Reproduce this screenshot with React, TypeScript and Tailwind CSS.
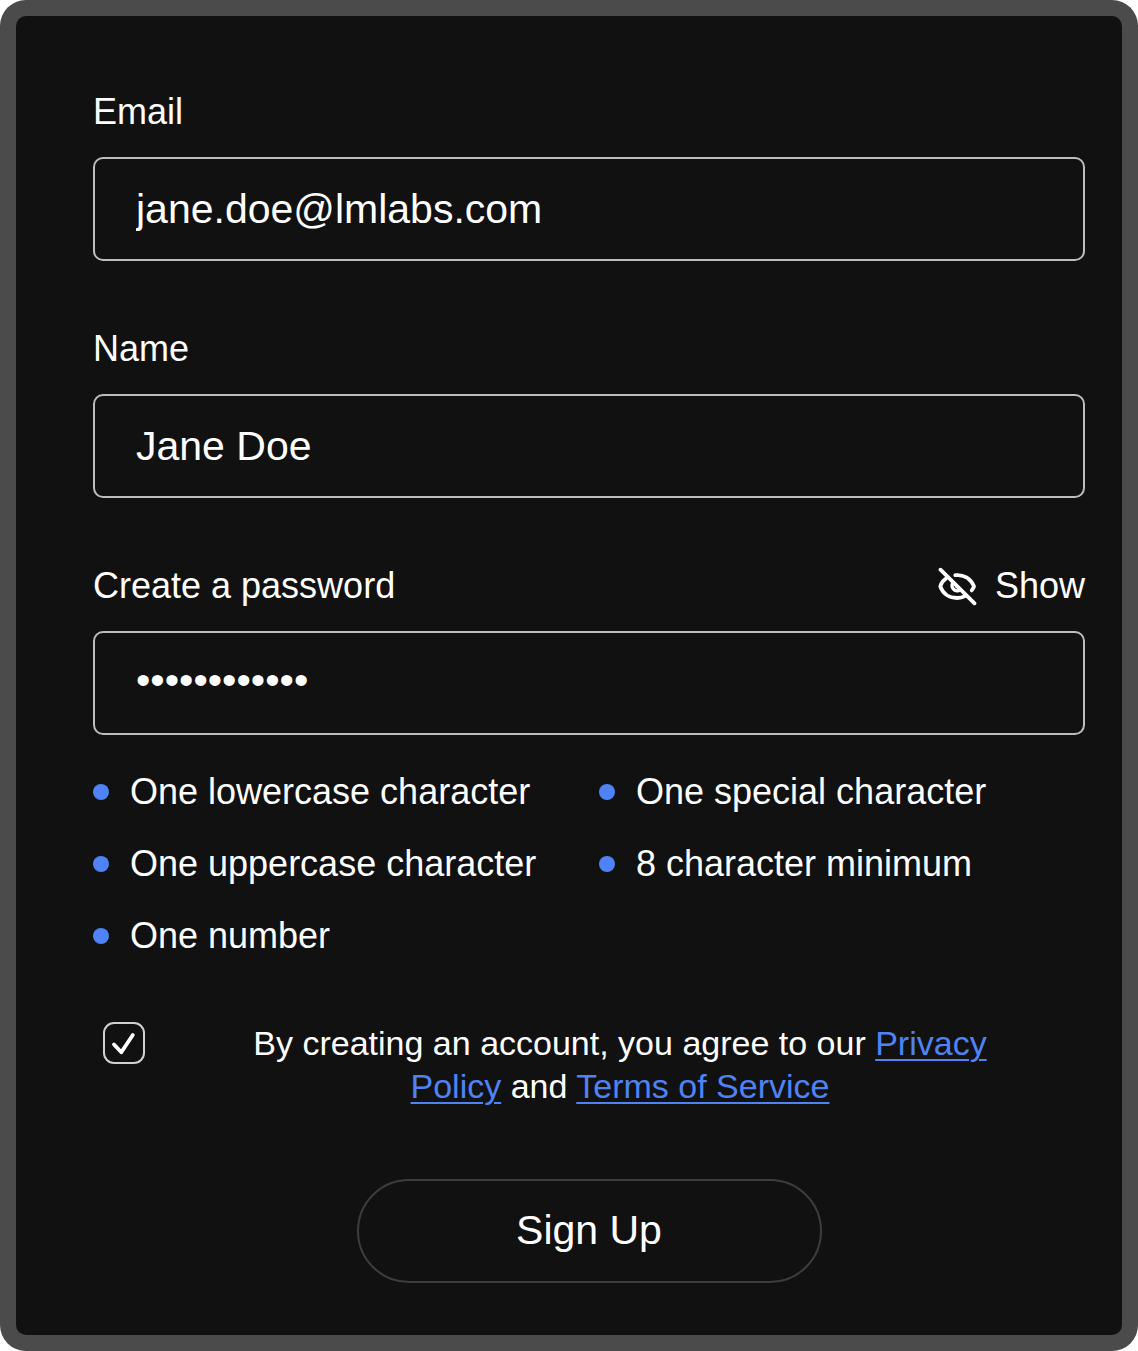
import { useState } from "react";

const rules = [
  "One lowercase character",
  "One special character",
  "One uppercase character",
  "8 character minimum",
  "One number",
];

const fieldClass =
  "block h-[104px] w-full rounded-[10px] border-2 border-[#bdbdbd] bg-transparent px-[41px] text-[41px] text-white outline-none focus:border-white";
const labelClass = "text-[36px] leading-[42px] text-white";
const linkClass = "text-[#4f83f5] underline decoration-2 underline-offset-4";

function EyeOff() {
  return (
    <svg
      viewBox="6 5 40 40"
      className="size-10"
      fill="none"
      stroke="currentColor"
      strokeWidth="3.8"
      strokeLinecap="round"
      strokeLinejoin="round"
      aria-hidden="true"
    >
      <path d="M8.500 8.700 42.500 42.300" />
      <path d="M14 17.500C10.500 20 8.800 23 8.300 25.300 11 33 17.500 37 25 37c3.200 0 5.800-.6 8-1.800" />
      <path d="M23.300 14.200C31.500 13.200 38.500 17.500 42 25.300c-.5 1.500-1.300 2.900-2.300 4.100" />
      <path d="M21 21.500c-2.400 4.300.6 9.300 5.800 8.200" strokeWidth="3.400" />
      <path d="M24.500 25.500l1.500 1" strokeWidth="3" />
    </svg>
  );
}

export default function App() {
  const [show, setShow] = useState(false);
  const [agree, setAgree] = useState(true);
  return (
    <main className="min-h-screen rounded-[26px] bg-[#4b4b4b] p-4 font-['Liberation_Sans',Arial,sans-serif] text-white">
      <form
        className="min-h-[calc(100vh-32px)] rounded-[10px] bg-[#111111] pt-[75px] pr-[37px] pb-[51px] pl-[77px]"
        onSubmit={(e) => e.preventDefault()}
      >
        <div className="flex flex-col gap-6">
          <label htmlFor="email" className={labelClass}>Email</label>
          <input id="email" type="email" defaultValue="jane.doe@lmlabs.com" className={fieldClass} />
        </div>
        <div className="mt-[67px] flex flex-col gap-6">
          <label htmlFor="name" className={labelClass}>Name</label>
          <input id="name" type="text" defaultValue="Jane Doe" className={fieldClass} />
        </div>
        <div className="mt-[67px] flex flex-col gap-6">
          <div className="flex items-center justify-between">
            <label htmlFor="password" className={labelClass}>Create a password</label>
            <button type="button" onClick={() => setShow(!show)} className="flex items-center gap-[17px] text-[36px] leading-[42px]">
              <EyeOff />
              {show ? "Hide" : "Show"}
            </button>
          </div>
          <input
            id="password"
            type={show ? "text" : "password"}
            defaultValue="Password123!"
            className={`${fieldClass} pb-1.5`}
          />
        </div>
        <ul className="mt-9 grid grid-cols-[506px_1fr] gap-y-[30px] text-[36px] leading-[42px]">
          {rules.map((rule) => (
            <li key={rule} className="flex items-center gap-[21px]">
              <span className="size-4 shrink-0 rounded-full bg-[#4f83f5]" />
              {rule}
            </li>
          ))}
        </ul>
        <div className="mt-[65px] flex items-start gap-[10px] pl-[10px]">
          <span className="relative size-[42px] shrink-0">
            <input
              id="agree"
              type="checkbox"
              checked={agree}
              onChange={(e) => setAgree(e.target.checked)}
              className="block size-full appearance-none rounded-[11px] border-2 border-[#d0d0d0]"
            />
            {agree && (
              <svg
                viewBox="0 0 42 42"
                className="pointer-events-none absolute inset-0"
                fill="none"
                stroke="white"
                strokeWidth="3.8"
                strokeLinecap="round"
                strokeLinejoin="round"
                aria-hidden="true"
              >
                <path d="M11 22.500 18.300 30.300 29.800 13" />
              </svg>
            )}
          </span>
          <label htmlFor="agree" className="flex-1 px-[90px] text-center text-[34px] leading-[43px]">
            By creating an account, you agree to our{" "}
            <a href="#privacy" className={linkClass}>Privacy Policy</a> and{" "}
            <a href="#terms" className={linkClass}>Terms of Service</a>
          </label>
        </div>
        <button type="submit" className="mx-auto mt-[71px] block h-[104px] w-[465px] rounded-full border-2 border-[#3d3d3d] text-[41px]">
          Sign Up
        </button>
      </form>
    </main>
  );
}
